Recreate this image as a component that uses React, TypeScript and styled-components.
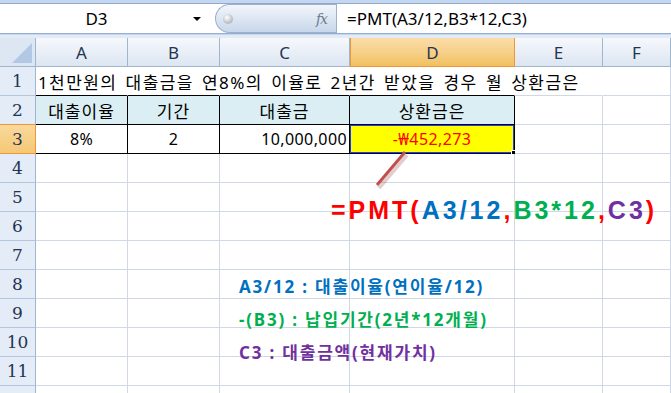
import styled, { createGlobalStyle } from "styled-components";

const GlobalStyle = createGlobalStyle`
  html, body { margin: 0; padding: 0; background: #fff; }
  body { overflow: hidden; }
`;

const Page = styled.div`
  position: relative;
  width: 671px;
  height: 393px;
  overflow: hidden;
  background: #fff;
  font-family: "Noto Sans", "Noto Sans CJK KR", sans-serif;
`;

const TopStrip = styled.div`
  height: 3px;
  background: #c4d7ee;
  border-bottom: 1px solid #8eaad0;
`;

const FormulaBar = styled.div`
  display: flex;
  height: 29px;
  border-bottom: 1px solid #94afd3;
`;

const NameBox = styled.div`
  width: 215px;
  display: grid;
  grid-template-columns: 1fr 22px;
  align-items: center;
  font-size: 17px;
  color: #000;
  text-align: center;
`;

const DropArrow = styled.span`
  width: 0;
  height: 0;
  border-left: 4px solid transparent;
  border-right: 4px solid transparent;
  border-top: 4px solid #000;
`;

const FxPill = styled.div`
  width: 121px;
  box-sizing: border-box;
  display: flex;
  align-items: center;
  justify-content: space-between;
  padding: 0 9px 0 7px;
  border: 1px solid #9ab0cc;
  border-right: none;
  border-radius: 15px 0 0 15px;
  background: linear-gradient(#f3f6fb, #dbe5f2 55%, #c8d7eb);
`;

const Knob = styled.span`
  width: 10px;
  height: 10px;
  border-radius: 50%;
  background: radial-gradient(circle at 40% 35%, #fff, #b4b9c0 70%, #8d949d);
`;

const FxLabel = styled.span`
  font-family: "DejaVu Serif", serif;
  font-style: italic;
  font-size: 14px;
  color: #6b7a8e;
  letter-spacing: -1px;
`;

const FormulaInput = styled.div`
  flex: 1;
  display: flex;
  align-items: center;
  padding-left: 10px;
  border-left: 1px solid #9ab0cc;
  font-size: 17px;
  color: #000;
`;

const Divider = styled.div`
  height: 3px;
  border-top: 1px solid #c7d6ea;
  background: #e3ebf6;
`;

const Sheet = styled.div`
  display: grid;
  grid-template-columns: 36px 92px 92px 130px 165px 88px 68px;
  grid-auto-rows: 29px;
`;

const Corner = styled.div`
  box-sizing: border-box;
  border-right: 1px solid #9eb6ce;
  border-bottom: 1px solid #9eb6ce;
  background: #dde7f4;
  display: flex;
  align-items: flex-end;
  justify-content: flex-end;
  padding: 0 3px 3px 0;
`;

const CornerTri = styled.span`
  width: 0;
  height: 0;
  border-left: 20px solid transparent;
  border-bottom: 20px solid #b3c8e5;
`;

const ColHead = styled.div<{ $active?: boolean }>`
  box-sizing: border-box;
  display: flex;
  align-items: center;
  justify-content: center;
  font-size: 17px;
  color: #1f3552;
  border-right: 1px solid ${(p) => (p.$active ? "#f29536" : "#9eb6ce")};
  border-bottom: 1px solid ${(p) => (p.$active ? "#f29536" : "#9eb6ce")};
  border-left: ${(p) => (p.$active ? "1px solid #f29536" : "none")};
  background: ${(p) =>
    p.$active
      ? "linear-gradient(#f9dda8, #f7d08a 50%, #f1c15f)"
      : "linear-gradient(#f6f8fc, #e9eff7 50%, #dce5f1)"};
`;

const RowHead = styled.div<{ $active?: boolean }>`
  box-sizing: border-box;
  display: flex;
  align-items: center;
  justify-content: center;
  font-family: "DejaVu Serif", "Liberation Serif", serif;
  font-size: 17px;
  color: #1f3552;
  border-right: 1px solid ${(p) => (p.$active ? "#f29536" : "#9eb6ce")};
  border-bottom: 1px solid ${(p) => (p.$active ? "#f29536" : "#b4c6dd")};
  border-top: ${(p) => (p.$active ? "1px solid #f29536" : "none")};
  margin-top: ${(p) => (p.$active ? "-1px" : "0")};
  background: ${(p) => (p.$active ? "linear-gradient(#f9d99c, #f5c875)" : "#e4ecf7")};
`;

type Edge = "grid" | "black" | "none";

const Cell = styled.div<{
  $fill?: string;
  $align?: "left" | "center" | "right";
  $right?: Edge;
  $bottom?: Edge;
  $color?: string;
  $spill?: boolean;
}>`
  position: relative;
  box-sizing: border-box;
  display: flex;
  align-items: center;
  justify-content: ${(p) =>
    p.$align === "right" ? "flex-end" : p.$align === "center" ? "center" : "flex-start"};
  padding: 0 2px;
  white-space: nowrap;
  font-size: 16px;
  letter-spacing: 0.4px;
  color: ${(p) => p.$color || "#000"};
  background: ${(p) => p.$fill || "#fff"};
  border-right: 1px solid
    ${(p) => (p.$right === "black" ? "#000" : p.$right === "none" ? "transparent" : "#d0d7e5")};
  border-bottom: 1px solid ${(p) => (p.$bottom === "black" ? "#000" : "#d0d7e5")};
  z-index: ${(p) => (p.$spill ? 2 : 0)};
`;

const Han = styled.span`
  font-size: 17px;
  letter-spacing: 1px;
`;

const Title = styled(Han)`
  letter-spacing: 1.4px;
  word-spacing: 2.5px;
`;

const Selected = styled(Cell)`
  box-shadow: inset 0 0 0 1px #1a3cff;
`;

const FillHandle = styled.span`
  position: absolute;
  right: -4px;
  bottom: -4px;
  width: 5px;
  height: 5px;
  background: #000;
  border: 1px solid #fff;
  z-index: 2;
`;

const BigFormula = styled.div`
  position: absolute;
  left: 331px;
  top: 196px;
  font-family: "Liberation Sans", sans-serif;
  font-weight: bold;
  font-size: 25px;
  letter-spacing: 3px;
  white-space: nowrap;
`;

const Part = styled.span<{ $color: string }>`
  color: ${(p) => p.$color};
`;

const Notes = styled.div`
  position: absolute;
  left: 239px;
  top: 274px;
  display: flex;
  flex-direction: column;
  gap: 8px;
  font-weight: bold;
  font-size: 17px;
  letter-spacing: 1.8px;
  white-space: nowrap;
`;

const Note = styled.div<{ $color: string }>`
  color: ${(p) => p.$color};
  line-height: 25px;
`;

const Arrow = styled.svg`
  position: absolute;
  left: 370px;
  top: 146px;
  overflow: visible;
`;

const cols = ["A", "B", "C", "D", "E", "F"];

export default function App() {
  const empty = (r: number) => cols.map((c) => <Cell key={c + r} />);

  const rows = [];
  for (let r = 4; r <= 12; r++) {
    rows.push(<RowHead key={"h" + r}>{r < 12 ? r : ""}</RowHead>, ...empty(r));
  }

  return (
    <Page>
      <GlobalStyle />
      <TopStrip />
      <FormulaBar>
        <NameBox>
          <span>D3</span>
          <DropArrow />
        </NameBox>
        <FxPill>
          <Knob />
          <FxLabel>fx</FxLabel>
        </FxPill>
        <FormulaInput>=PMT(A3/12,B3*12,C3)</FormulaInput>
      </FormulaBar>
      <Divider />
      <Sheet>
        <Corner>
          <CornerTri />
        </Corner>
        {cols.map((c) => (
          <ColHead key={c} $active={c === "D"}>
            {c}
          </ColHead>
        ))}

        <RowHead>1</RowHead>
        <Cell $right="none" $bottom="black" $spill>
          <Title>1천만원의 대출금을 연8%의 이율로 2년간 받았을 경우 월 상환금은</Title>
        </Cell>
        <Cell $right="none" $bottom="black" />
        <Cell $right="none" $bottom="black" />
        <Cell $right="none" $bottom="black" />
        <Cell $right="none" />
        <Cell />

        <RowHead>2</RowHead>
        {["대출이율", "기간", "대출금", "상환금은"].map((t) => (
          <Cell key={t} $fill="#daeef3" $align="center" $right="black" $bottom="black">
            <Han>{t}</Han>
          </Cell>
        ))}
        <Cell />
        <Cell />

        <RowHead $active>3</RowHead>
        <Cell $align="center" $right="black" $bottom="black">
          8%
        </Cell>
        <Cell $align="center" $right="black" $bottom="black">
          2
        </Cell>
        <Cell $align="right" $right="black" $bottom="black">
          10,000,000
        </Cell>
        <Selected $fill="#ffff00" $align="center" $right="black" $bottom="black" $color="#ff0000">
          -₩452,273
          <FillHandle />
        </Selected>
        <Cell />
        <Cell />

        {rows}
      </Sheet>

      <Arrow width="40" height="44">
        <line x1="36" y1="7" x2="8" y2="40" stroke="#8a3a38" strokeOpacity="0.25" strokeWidth="4" transform="translate(1,2)" />
        <line x1="35" y1="6" x2="7" y2="39" stroke="#c0504d" strokeWidth="3" />
      </Arrow>

      <BigFormula>
        <Part $color="#ff0000">=PMT(</Part>
        <Part $color="#0070c0">A3/12</Part>
        <Part $color="#ff0000">,</Part>
        <Part $color="#00b050">B3*12</Part>
        <Part $color="#ff0000">,</Part>
        <Part $color="#7030a0">C3</Part>
        <Part $color="#ff0000">)</Part>
      </BigFormula>

      <Notes>
        <Note $color="#0070c0">A3/12 : 대출이율(연이율/12)</Note>
        <Note $color="#00b050">-(B3) : 납입기간(2년*12개월)</Note>
        <Note $color="#7030a0">C3 : 대출금액(현재가치)</Note>
      </Notes>
    </Page>
  );
}
